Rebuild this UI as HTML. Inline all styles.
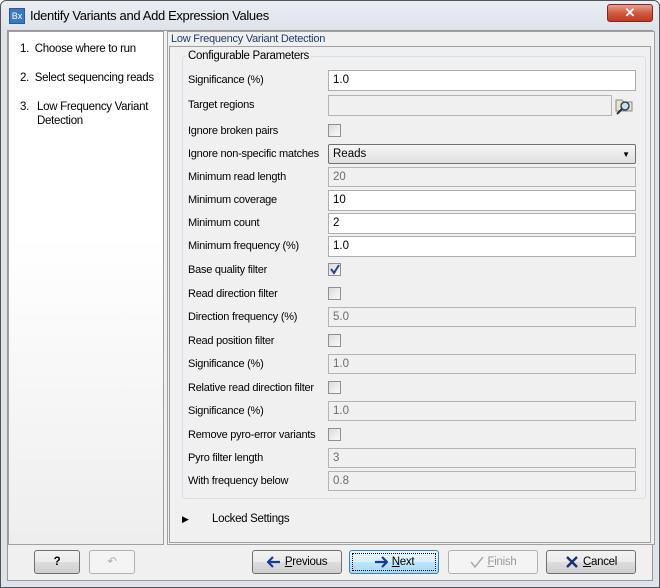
<!DOCTYPE html>
<html><head><meta charset="utf-8"><style>
*{box-sizing:border-box}
body{margin:0;width:660px;height:588px;overflow:hidden;font-family:"Liberation Sans",sans-serif;font-size:11px;color:#000;background:#fff}
.win{position:absolute;left:0;top:0;width:660px;height:588px;border:1px solid #555;border-radius:6px 6px 0 0;background:linear-gradient(#e9eef4,#dde3ea 30px,#dde3ea)}
.body{position:absolute;left:7px;top:30px;width:646px;height:551px;background:#f0f0f0;border:1px solid #999}
.abs{position:absolute}
.lbl{position:absolute;left:188px;font-size:11px;line-height:14px;letter-spacing:-0.25px}
.in{position:absolute;left:328px;width:308px;height:20px;border:1px solid #abadb3;background:#fff;padding:2px 4px;font-size:11.5px;line-height:14px}
.dis{background:#f0f0f0;border-color:#b4b4b4;color:#6d6d6d}
.cb{position:absolute;left:328px;width:13px;height:13px;border:1px solid #8e8f8f;background:linear-gradient(135deg,#dcdcdc,#fafafa)}
.btn{position:absolute;top:550px;height:24px;border:1px solid #707070;border-radius:3px;background:linear-gradient(#f2f2f2,#ebebeb 50%,#dddddd 50%,#cfcfcf);font-size:11.5px;text-align:center;line-height:22px;letter-spacing:-0.3px}
.btn svg{vertical-align:-3px;margin-right:4px}
.step{position:absolute;font-size:11.5px;line-height:14px;letter-spacing:-0.3px}
</style></head><body>
<div class="win">
 <div class="abs" style="left:8px;top:7px;width:16px;height:16px;background:#3a78c0;color:#fff;font-size:9px;line-height:14px;text-align:center;border:1px solid #2a5a9a">Bx</div>
 <div class="abs" style="left:29px;top:7px;font-size:13px;line-height:16px;letter-spacing:-0.35px">Identify Variants and Add Expression Values</div>
 <div class="abs" style="left:606px;top:3px;width:46px;height:18px;border:1px solid #7a2a20;border-radius:3px;background:linear-gradient(#e8a090,#d05a40 50%,#c03a20);color:#fff;font-weight:bold;text-align:center;line-height:16px;font-size:13px">✕</div>
</div>
<div class="body"></div>
<div class="abs" style="left:8px;top:31px;width:156px;height:514px;border:1px solid #a0a0a0;background:linear-gradient(#fff 40%,#eeeeee)"></div>
<div class="step" style="left:20px;top:42px">1.&nbsp;&nbsp;Choose where to run</div>
<div class="step" style="left:20px;top:71px">2.&nbsp;&nbsp;Select sequencing reads</div>
<div class="step" style="left:20px;top:100px">3.</div>
<div class="step" style="left:37px;top:100px">Low Frequency Variant<br>Detection</div>

<div class="abs" style="left:167px;top:31px;width:488px;height:514px;border:1px solid #a0a0a0;background:#f0f0f0"></div>
<div class="abs" style="left:171px;top:32px;font-size:11px;color:#1e3c6e;line-height:14px;letter-spacing:-0.25px">Low Frequency Variant Detection</div>
<div class="abs" style="left:169px;top:46px;width:482px;height:497px;border:1px solid #a0a0a0"></div>
<div class="abs" style="left:182px;top:56px;width:464px;height:443px;border:1px solid #d5dfe5;border-radius:3px"></div>
<div class="abs" style="left:186px;top:49px;padding:0 2px;background:#f0f0f0;font-size:11.5px;line-height:14px;letter-spacing:-0.3px">Configurable Parameters</div>

<div class="lbl" style="top:73px">Significance (%)</div><div class="in" style="top:70px;height:21px">1.0</div>
<div class="lbl" style="top:98px">Target regions</div><div class="in dis" style="top:95px;width:284px;height:21px"></div>
<svg class="abs" style="left:614px;top:95px" width="20" height="20" viewBox="0 0 20 20"><path d="M2 5h6l2 2h8v9H2z" fill="#e8e4c8" stroke="#888"/><circle cx="11" cy="11" r="4" fill="#cde" stroke="#345" stroke-width="1.5"/><path d="M8 14l-5 5" stroke="#234" stroke-width="2"/></svg>
<div class="lbl" style="top:124px">Ignore broken pairs</div><div class="cb" style="top:124px"></div>
<div class="lbl" style="top:147px">Ignore non-specific matches</div><div class="in" style="top:144px;height:20px;background:linear-gradient(#f6f6f6,#e0e0e0);border-color:#707070;border-radius:2px">Reads<span style="position:absolute;right:5px;top:3px;font-size:8px">▼</span></div>
<div class="lbl" style="top:170px">Minimum read length</div><div class="in dis" style="top:167px">20</div>
<div class="lbl" style="top:193px">Minimum coverage</div><div class="in" style="top:190px;height:21px">10</div>
<div class="lbl" style="top:216px">Minimum count</div><div class="in" style="top:213px;height:21px">2</div>
<div class="lbl" style="top:239px">Minimum frequency (%)</div><div class="in" style="top:236px;height:21px">1.0</div>
<div class="lbl" style="top:263px">Base quality filter</div><div class="cb" style="top:263px"><svg width="11" height="11" style="position:absolute;left:0;top:0"><path d="M2 5l3 4 5-8" fill="none" stroke="#2a3f8a" stroke-width="2"/></svg></div>
<div class="lbl" style="top:287px">Read direction filter</div><div class="cb" style="top:287px"></div>
<div class="lbl" style="top:310px">Direction frequency (%)</div><div class="in dis" style="top:307px">5.0</div>
<div class="lbl" style="top:334px">Read position filter</div><div class="cb" style="top:334px"></div>
<div class="lbl" style="top:357px">Significance (%)</div><div class="in dis" style="top:354px">1.0</div>
<div class="lbl" style="top:381px">Relative read direction filter</div><div class="cb" style="top:381px"></div>
<div class="lbl" style="top:404px">Significance (%)</div><div class="in dis" style="top:401px">1.0</div>
<div class="lbl" style="top:428px">Remove pyro-error variants</div><div class="cb" style="top:428px"></div>
<div class="lbl" style="top:451px">Pyro filter length</div><div class="in dis" style="top:448px">3</div>
<div class="lbl" style="top:474px">With frequency below</div><div class="in dis" style="top:471px">0.8</div>

<div class="abs" style="left:182px;top:514px;font-size:9px">▶</div>
<div class="abs" style="left:212px;top:513px;font-size:11.5px;letter-spacing:-0.3px">Locked Settings</div>

<div class="btn" style="left:34px;width:46px;font-weight:bold">?</div>
<div class="btn" style="left:89px;width:46px;border-color:#adb2b5;background:#f4f4f4;color:#aaa">↶</div>
<div class="btn" style="left:252px;width:90px"><svg width="14" height="12"><path d="M13 6H2M6 1L1 6l5 5" fill="none" stroke="#1a3a9a" stroke-width="2.2"/></svg><u>P</u>revious</div>
<div class="btn" style="left:349px;width:90px;border-color:#3c7fb1;background:linear-gradient(#eaf6fd,#d9f0fc 50%,#bee6fd 50%,#a7d9f5)"><div style="position:absolute;inset:2px;border:1px dotted #000"></div><svg width="14" height="12"><path d="M1 6h11M8 1l5 5-5 5" fill="none" stroke="#1a3a9a" stroke-width="2.2"/></svg><u>N</u>ext</div>
<div class="btn" style="left:448px;width:90px;border-color:#adb2b5;background:#f4f4f4;color:#999"><svg width="14" height="12"><path d="M1 6l4 5 8-10" fill="none" stroke="#aaa" stroke-width="1.5"/></svg><u>F</u>inish</div>
<div class="btn" style="left:546px;width:90px"><svg width="14" height="12"><path d="M2 1l10 10M12 1L2 11" fill="none" stroke="#1a3070" stroke-width="2.4"/></svg><u>C</u>ancel</div>
</body></html>
